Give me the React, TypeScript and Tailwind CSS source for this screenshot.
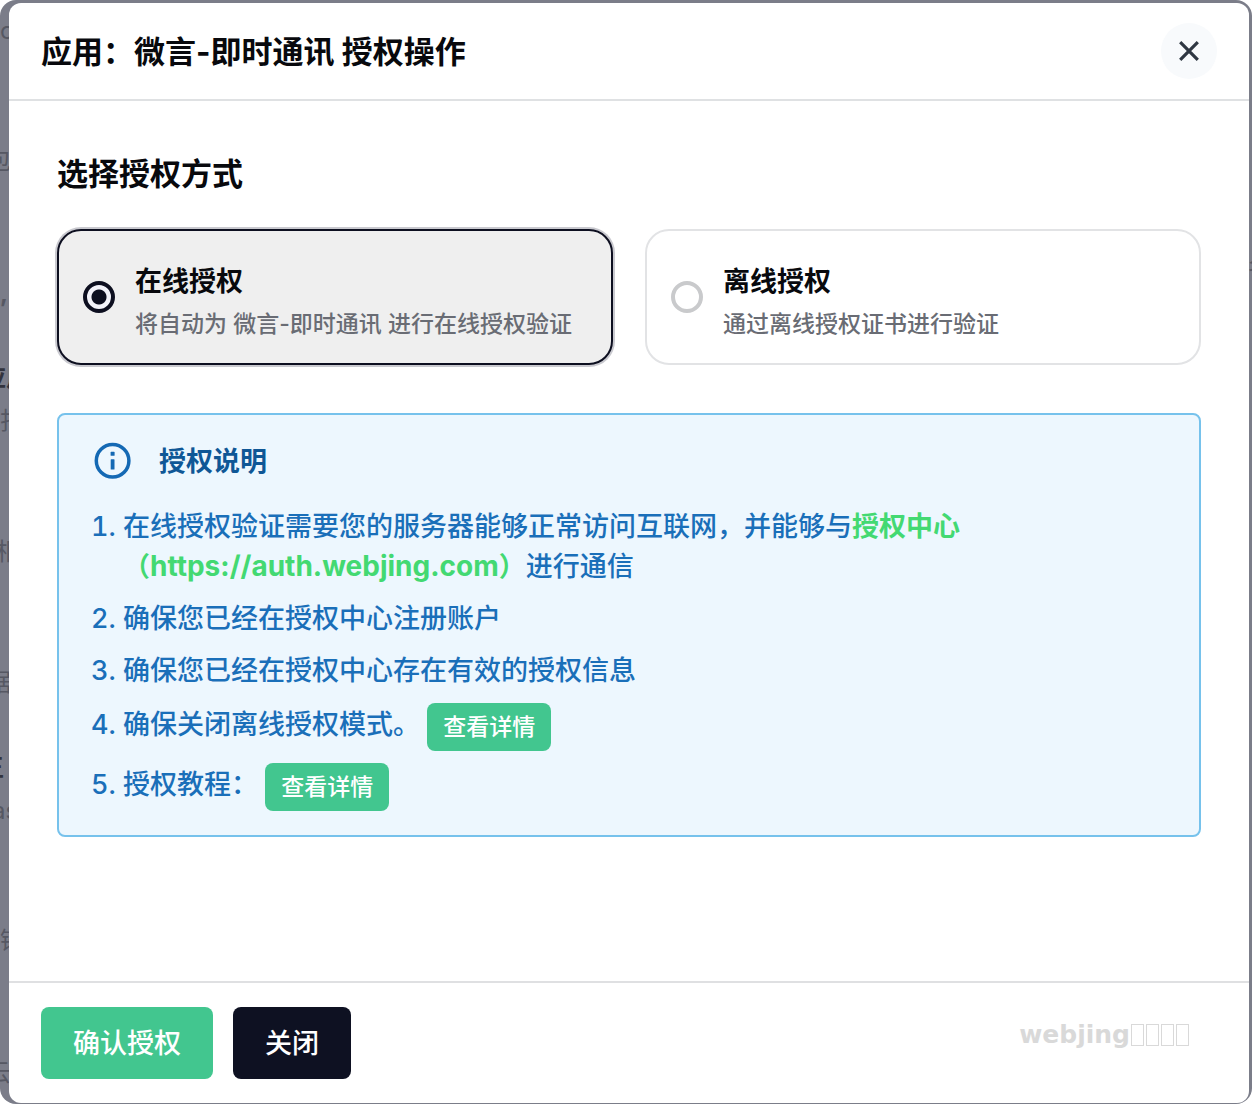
import { useState } from "react";
import type { ReactNode } from "react";

type Mode = "online" | "offline";

function InfoIcon() {
  return (
    <svg viewBox="0 0 44 44" className="size-11 shrink-0" fill="none" aria-hidden="true">
      <circle cx="21.6" cy="21.7" r="16.3" stroke="#1469b4" strokeWidth="3.5" />
      <rect x="19.6" y="12.8" width="4" height="4" rx="0.6" fill="#1469b4" />
      <rect x="19.7" y="20.2" width="3.8" height="10.4" rx="0.6" fill="#1469b4" />
    </svg>
  );
}

function CloseIcon() {
  return (
    <svg viewBox="0 0 20 20" className="size-5" fill="none" aria-hidden="true">
      <path d="M1.2 1.2 18.8 18.8M18.8 1.2 1.2 18.8" stroke="#2f3742" strokeWidth="3.2" />
    </svg>
  );
}

function OptionCard(props: {
  value: Mode;
  current: Mode;
  onSelect: (mode: Mode) => void;
  title: string;
  description: string;
}) {
  const { value, current, onSelect, title, description } = props;
  return (
    <label className="flex h-[136px] cursor-pointer items-center gap-5 rounded-3xl border-2 border-[#e2e3e5] bg-white px-6 has-[:checked]:border-[#0d0f20] has-[:checked]:bg-[#efefef] has-[:checked]:ring-2 has-[:checked]:ring-[#c9c9cf]">
      <input
        type="radio"
        name="auth-mode"
        value={value}
        checked={current === value}
        onChange={() => onSelect(value)}
        className="size-8 shrink-0 appearance-none rounded-full border-4 border-[#c9cacc] bg-white checked:border-[#0d0f20] checked:bg-[radial-gradient(circle,#0d0f20_7px,#f3f3fa_8px)]"
      />
      <span className="flex flex-col pt-3">
        <span className="text-[27px] leading-[42px] font-bold text-[#08090d]">{title}</span>
        <span className="text-[23px] leading-[42px] font-medium text-[#696c74]">{description}</span>
      </span>
    </label>
  );
}

function DetailButton({ children }: { children: ReactNode }) {
  return (
    <button
      type="button"
      className="h-12 rounded-lg bg-[#42c68f] px-4 align-top text-[23px] leading-[48px] font-medium text-white"
    >
      {children}
    </button>
  );
}

function Backdrop() {
  return (
    <div
      aria-hidden="true"
      className="absolute inset-0 overflow-hidden rounded-2xl bg-[#7b7d89] text-2xl leading-6 whitespace-nowrap text-[#565863]"
    >
      <span className="absolute top-[19px] left-0">c</span>
      <span className="absolute top-[149px] -left-[13px]">包</span>
      <span className="absolute top-[282px] left-0 font-bold">,</span>
      <span className="absolute top-[366px] -left-[18px] font-bold text-[#32343e]">应用</span>
      <span className="absolute top-[409px] left-0">扫</span>
      <span className="absolute top-[540px] -left-[4px]">相</span>
      <span className="absolute top-[671px] -left-[13px]">据</span>
      <span className="absolute top-[756px] -left-[20px] font-bold text-[#32343e]">王</span>
      <span className="absolute top-[799px] -left-[8px]">as</span>
      <span className="absolute top-[929px] left-0">锋</span>
      <span className="absolute top-[1061px] -left-[13px]">云</span>
      <span className="absolute top-[256px] -right-[20px]">名</span>
    </div>
  );
}

export default function App() {
  const [mode, setMode] = useState<Mode>("online");

  return (
    <div className="relative flex min-h-screen bg-white pt-[3px] pr-[3px] pb-px pl-[9px] font-['Inter','Noto_Sans_CJK_SC',sans-serif]">
      <Backdrop />
      <section
        role="dialog"
        aria-labelledby="dialog-title"
        className="relative flex flex-1 flex-col rounded-xl bg-white"
      >
        <header className="flex h-[98px] items-center justify-between border-b-2 border-[#dfe1e3] px-8">
          <h1 id="dialog-title" className="pt-0.5 text-[31px] leading-10 font-bold text-[#08090d]">
            应用：微言-即时通讯 授权操作
          </h1>
          <button
            type="button"
            aria-label="关闭对话框"
            className="flex size-14 items-center justify-center rounded-full bg-[#f8fafc]"
          >
            <CloseIcon />
          </button>
        </header>

        <main className="flex flex-1 flex-col p-12">
          <h2 className="text-[31px] leading-[50px] font-bold text-[#08090d]">选择授权方式</h2>
          <div className="mt-[30px] grid grid-cols-2 gap-8">
            <OptionCard
              value="online"
              current={mode}
              onSelect={setMode}
              title="在线授权"
              description="将自动为 微言-即时通讯 进行在线授权验证"
            />
            <OptionCard
              value="offline"
              current={mode}
              onSelect={setMode}
              title="离线授权"
              description="通过离线授权证书进行验证"
            />
          </div>

          <div className="mt-12 rounded-lg border-2 border-[#76c2ec] bg-[#edf7fe] px-8 py-6">
            <div className="flex h-11 items-center gap-6">
              <InfoIcon />
              <h3 className="pt-0.5 text-[27px] leading-10 font-bold text-[#0f5796]">授权说明</h3>
            </div>
            <ol className="mt-6 flex list-decimal flex-col gap-3 pl-8 text-[27px] leading-10 font-medium text-[#1a6fb9]">
              <li>
                在线授权验证需要您的服务器能够正常访问互联网，并能够与
                <a href="https://auth.webjing.com" className="leading-8 font-bold text-[#43d972]">
                  授权中心
                  <br />
                  （<span className="text-[28px]">https://auth.webjing.com</span>）
                </a>
                进行通信
              </li>
              <li>确保您已经在授权中心注册账户</li>
              <li>确保您已经在授权中心存在有效的授权信息</li>
              <li className="h-12 leading-[44px]">
                确保关闭离线授权模式。 <DetailButton>查看详情</DetailButton>
              </li>
              <li className="h-12 leading-[44px]">
                授权教程： <DetailButton>查看详情</DetailButton>
              </li>
            </ol>
          </div>
        </main>

        <footer className="flex items-center gap-5 border-t-2 border-[#dfe0e2] px-8 py-6">
          <button
            type="button"
            className="h-[72px] rounded-lg bg-[#42c68f] px-8 pt-0.5 text-[27px] leading-10 font-medium text-white"
          >
            确认授权
          </button>
          <button
            type="button"
            className="h-[72px] rounded-lg bg-[#0e1122] px-8 pt-0.5 text-[27px] leading-10 font-medium text-white"
          >
            关闭
          </button>
          <div className="mr-7 mb-4 ml-auto flex items-center font-['DejaVu_Sans',sans-serif] text-[25px] leading-8 font-bold text-[#d9d9d9]">
            webjing
            <span className="flex gap-[2px] pl-px" aria-hidden="true">
              <span className="h-[22px] w-[13px] border border-[#d9d9d9]" />
              <span className="h-[22px] w-[13px] border border-[#d9d9d9]" />
              <span className="h-[22px] w-[13px] border border-[#d9d9d9]" />
              <span className="h-[22px] w-[13px] border border-[#d9d9d9]" />
            </span>
          </div>
        </footer>
      </section>
    </div>
  );
}
